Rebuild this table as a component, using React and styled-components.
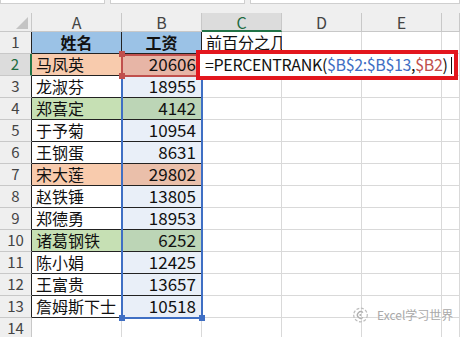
import React from 'react';
import styled, { createGlobalStyle } from 'styled-components';

const GlobalStyle = createGlobalStyle`
  html, body {
    margin: 0;
    padding: 0;
    background: #fff;
  }
  body {
    width: 460px;
    height: 337px;
    overflow: hidden;
    font-family: "Noto Sans CJK SC", "Noto Sans", sans-serif;
    line-height: 1.1;
  }
`;

const Page = styled.div`
  position: relative;
  width: 460px;
  height: 337px;
  overflow: hidden;
  background: #efefef;
`;

const TopBar = styled.div`
  height: 13px;
  display: flex;
  gap: 5px;
  align-items: flex-start;
`;

const BarBox = styled.div`
  flex: ${p => (p.grow ? '1' : `0 0 ${p.w}px`)};
  height: 3px;
  background: #fff;
  border: 1px solid #cfcfcf;
  border-top: none;
`;

const Sheet = styled.div`
  position: relative;
  display: grid;
  grid-template-columns: 32px 90px 80px 80px 80px 80px 1fr;
  grid-template-rows: 19px repeat(14, 22px);
  background: #fff;
`;

const Corner = styled.div`
  display: flex;
  align-items: flex-end;
  justify-content: flex-end;
  padding: 0 3px 2px 0;
  background: #efefef;
  border-right: 1px solid #c8c8c8;
  border-bottom: 1px solid #c8c8c8;
`;

const ColHead = styled.div`
  display: flex;
  align-items: center;
  justify-content: center;
  box-sizing: border-box;
  background: ${p => (p.active ? '#dcdcdc' : '#efefef')};
  color: ${p => (p.active ? '#1d6b3f' : '#444')};
  font-size: 16px;
  line-height: 1;
  border-right: 1px solid #c8c8c8;
  border-bottom: ${p => (p.active ? '2px solid #217346' : '1px solid #c8c8c8')};
`;

const RowHead = styled.div`
  display: flex;
  align-items: center;
  justify-content: center;
  box-sizing: border-box;
  background: ${p => (p.active ? '#dcdcdc' : '#efefef')};
  color: ${p => (p.active ? '#1d6b3f' : '#444')};
  font-size: 15px;
  border-bottom: 1px solid #c8c8c8;
  border-right: ${p => (p.active ? '2px solid #217346' : p.dark ? '1px solid #222' : '1px solid #c8c8c8')};
`;

const Cell = styled.div`
  display: flex;
  align-items: center;
  justify-content: ${p => p.align || 'flex-start'};
  box-sizing: border-box;
  padding: 0 ${p => (p.align === 'flex-end' ? '5px' : '0')} 0 ${p => (p.align === 'flex-start' || !p.align ? '4px' : '0')};
  background: ${p => p.bg || '#fff'};
  color: #111;
  font-size: ${p => (p.num ? '17px' : '16px')};
  font-weight: ${p => (p.bold ? 700 : 400)};
  white-space: nowrap;
  overflow: visible;
  border-right: 1px solid ${p => (p.dark ? '#222' : '#d9d9d9')};
  border-bottom: 1px solid ${p => (p.dark ? '#222' : '#d9d9d9')};
`;

const RangeBox = styled.div`
  position: absolute;
  box-sizing: border-box;
  left: ${p => p.x}px;
  top: ${p => p.y}px;
  width: ${p => p.w}px;
  height: ${p => p.h}px;
  border: 2px solid ${p => p.color};
  pointer-events: none;
`;

const Handle = styled.div`
  position: absolute;
  width: 6px;
  height: 6px;
  left: ${p => p.x - 3}px;
  top: ${p => p.y - 3}px;
  background: ${p => p.color};
`;

const Callout = styled.div`
  position: absolute;
  left: 196px;
  top: 37px;
  width: 262px;
  height: 30px;
  box-sizing: border-box;
  border: 4px solid #e3161d;
  background: #fff;
  display: flex;
  align-items: center;
  padding-left: 5px;
  font-size: 16px;
  letter-spacing: -0.35px;
  color: #111;
  white-space: nowrap;
`;

const Ref = styled.span`
  color: ${p => p.color};
`;

const Caret = styled.span`
  display: inline-block;
  width: 1px;
  height: 17px;
  margin-left: 3px;
  background: #111;
`;

const Watermark = styled.div`
  position: absolute;
  left: 352px;
  top: 307px;
  display: flex;
  align-items: center;
  gap: 8px;
  font-size: 12px;
  color: #a9a9a9;
  text-shadow: 0 0 2px #fff;
`;

const rows = [
  { name: '姓名', pay: '工资', head: true },
  { name: '马凤英', pay: 20606, a: '#f8cbad', b: '#e7b5a6' },
  { name: '龙淑芬', pay: 18955 },
  { name: '郑喜定', pay: 4142, a: '#c6e0b4', b: '#bcd5b6' },
  { name: '于予菊', pay: 10954 },
  { name: '王钢蛋', pay: 8631 },
  { name: '宋大莲', pay: 29802, a: '#f8cbad', b: '#eabfaa' },
  { name: '赵铁锤', pay: 13805 },
  { name: '郑德勇', pay: 18953 },
  { name: '诸葛钢铁', pay: 6252, a: '#c6e0b4', b: '#bcd5b6' },
  { name: '陈小娟', pay: 12425 },
  { name: '王富贵', pay: 13657 },
  { name: '詹姆斯下士', pay: 10518 },
];

const cols = ['A', 'B', 'C', 'D', 'E', ''];

const SelectAll = () => (
  <svg width="12" height="12" viewBox="0 0 12 12">
    <polygon points="12,0 12,12 0,12" fill="#c4c4c4" />
  </svg>
);

const WeChatMark = () => (
  <svg width="17" height="16" viewBox="0 0 17 16">
    <circle cx="8.5" cy="8" r="6.8" fill="none" stroke="#bdbdbd" strokeWidth="1.2" strokeDasharray="3 1.6" />
    <path d="M11 5.6 A3.3 3.3 0 1 0 11 10.4" fill="none" stroke="#b0b0b0" strokeWidth="1.3" />
    <circle cx="8.3" cy="8" r="1" fill="#b0b0b0" />
  </svg>
);

export default function App() {
  return (
    <Page>
      <GlobalStyle />
      <TopBar>
        <BarBox w={103} />
        <BarBox w={133} />
        <BarBox grow />
      </TopBar>
      <Sheet>
        <Corner>
          <SelectAll />
        </Corner>
        {cols.map((c, i) => (
          <ColHead key={i} active={c === 'C'}>{c}</ColHead>
        ))}

        {rows.map((r, i) => (
          <React.Fragment key={i}>
            <RowHead active={i === 1} dark>{i + 1}</RowHead>
            <Cell dark bg={r.head ? '#9bc2e6' : r.a} bold={r.head} align={r.head ? 'center' : 'flex-start'}>
              {r.name}
            </Cell>
            <Cell
              dark
              num={!r.head}
              bold={r.head}
              bg={r.head ? '#9bc2e6' : r.b || '#e9eff8'}
              align={r.head ? 'center' : 'flex-end'}
            >
              {r.pay}
            </Cell>
            <Cell>{i === 0 ? '前百分之几' : ''}</Cell>
            <Cell />
            <Cell />
            <Cell />
          </React.Fragment>
        ))}

        <RowHead>14</RowHead>
        <Cell />
        <Cell />
        <Cell />
        <Cell />
        <Cell />
        <Cell />

        <RangeBox x={121} y={41} w={82} h={265} color="#3f6fc4" />
        <Handle x={122} y={305} color="#3f6fc4" />
        <Handle x={202} y={305} color="#3f6fc4" />

        <RangeBox x={121} y={41} w={82} h={23} color="#c0504d" />
        <Handle x={122} y={41} color="#c0504d" />
        <Handle x={122} y={63} color="#c0504d" />

        <Callout>
          =PERCENTRANK(
          <Ref color="#3f6fc4">$B$2:$B$13</Ref>,
          <Ref color="#c0504d">$B2</Ref>)
          <Caret />
        </Callout>
      </Sheet>
      <Watermark>
        <WeChatMark />
        Excel学习世界
      </Watermark>
    </Page>
  );
}
